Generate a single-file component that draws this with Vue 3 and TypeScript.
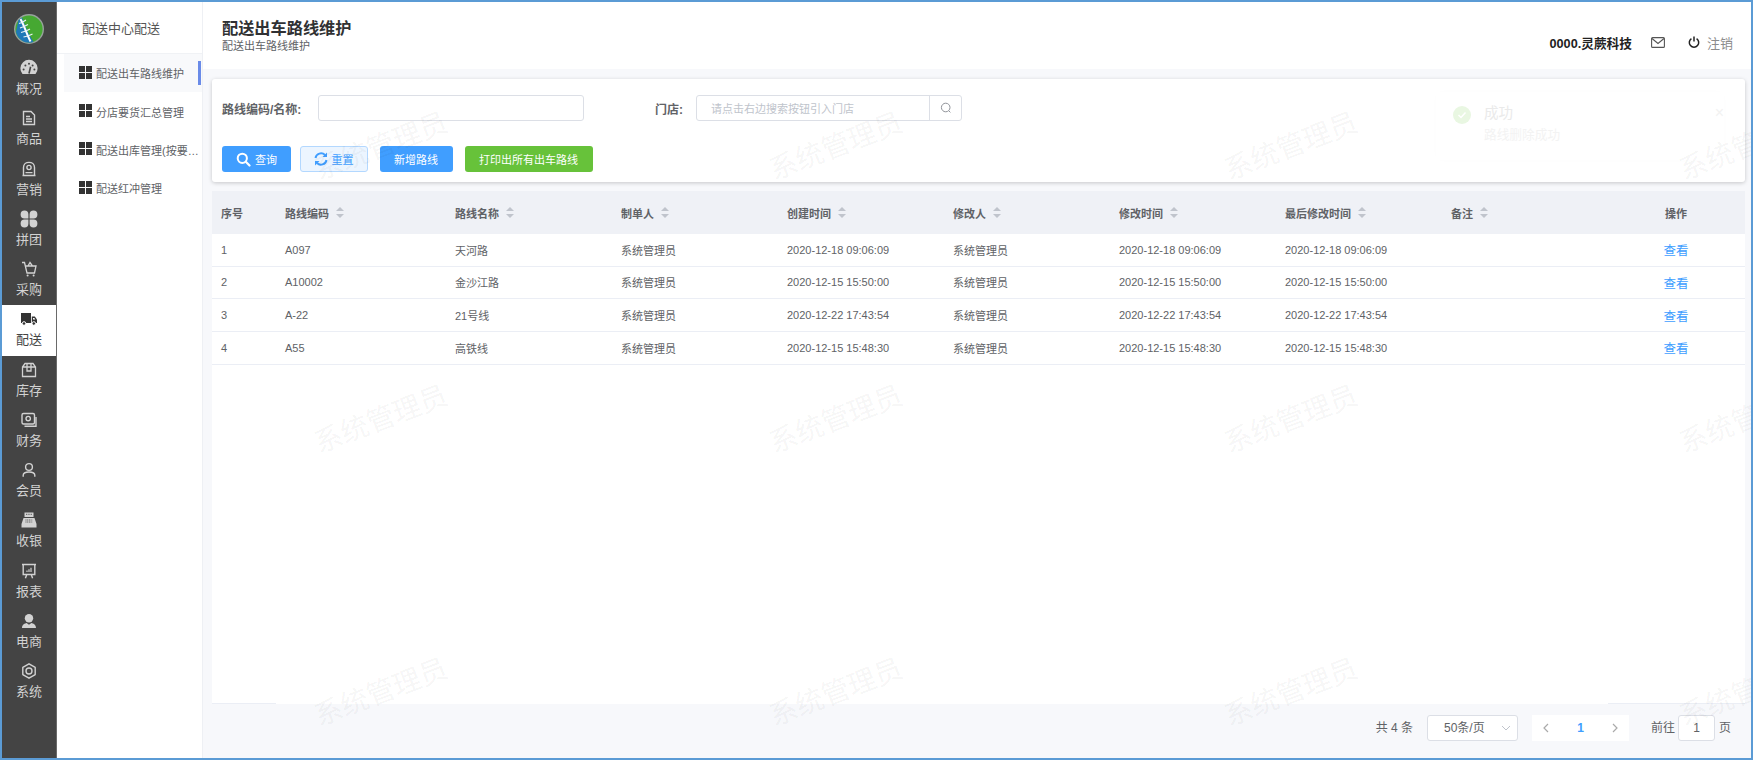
<script setup lang="ts">
interface RailItem { label: string; icon: string; active?: boolean }
const rail: RailItem[] = [
  { label: '概况', icon: 'gauge' }, { label: '商品', icon: 'doc' }, { label: '营销', icon: 'stamp' },
  { label: '拼团', icon: 'clover' }, { label: '采购', icon: 'cart' }, { label: '配送', icon: 'truck', active: true },
  { label: '库存', icon: 'box' }, { label: '财务', icon: 'money' }, { label: '会员', icon: 'user' },
  { label: '收银', icon: 'till' }, { label: '报表', icon: 'board' }, { label: '电商', icon: 'agent' }, { label: '系统', icon: 'gear' },
]
const subnav = ['配送出车路线维护', '分店要货汇总管理', '配送出库管理(按要货)', '配送红冲管理']
const columns = [
  { label: '序号' }, { label: '路线编码', sort: true }, { label: '路线名称', sort: true }, { label: '制单人', sort: true },
  { label: '创建时间', sort: true }, { label: '修改人', sort: true }, { label: '修改时间', sort: true },
  { label: '最后修改时间', sort: true }, { label: '备注', sort: true }, { label: '操作' },
]
const rows = [
  { n: 1, code: 'A097', name: '天河路', time: '2020-12-18 09:06:09' },
  { n: 2, code: 'A10002', name: '金沙江路', time: '2020-12-15 15:50:00' },
  { n: 3, code: 'A-22', name: '21号线', time: '2020-12-22 17:43:54' },
  { n: 4, code: 'A55', name: '高铁线', time: '2020-12-15 15:48:30' },
]
const marks = Array.from({ length: 12 }, (_, i) => i)
</script>

<template>
  <div class="app">
    <aside class="rail">
      <div class="logo">
        <svg width="32" height="32" viewBox="0 0 32 32">
          <circle cx="16" cy="16" r="15" fill="#98a29d" />
          <circle cx="16" cy="16" r="13.6" fill="#46a832" />
          <path d="M5.5 7 L9 4.5 C12 12 15 20 20.5 29 A13.6 13.6 0 0 1 3 19 Z" fill="#1f78b8" />
          <path d="M7.5 6 C11 12 14 22 17.5 28.5" fill="none" stroke="#fff" stroke-width="2" />
          <path d="M6 10.5 L9 9.5 L13 7 M7 15 L11 13.5 L15 11.5 M8 19.5 L13 18 L17 16 M10.5 24 L15 23 L19.5 21" fill="none" stroke="#eaf3f6" stroke-width="1.2" />
        </svg>
      </div>
      <div v-for="item in rail" :key="item.label" class="rail-item" :class="{ on: item.active }">
        <svg class="rail-icon" viewBox="0 0 20 20" width="20" height="20">
          <template v-if="item.icon === 'gauge'">
            <path d="M3.5 16 A8.6 8.6 0 1 1 16.5 16 Z" fill="currentColor" />
            <g fill="#444"><circle cx="4.6" cy="11.4" r="1" /><circle cx="6.4" cy="7.6" r="1" /><circle cx="10" cy="5.8" r="1" /><circle cx="13.6" cy="7.6" r="1" /><circle cx="15.4" cy="11.4" r="1" /></g>
            <path d="M10 15.5 L11.6 8.8" stroke="#444" stroke-width="1.6" />
          </template>
          <template v-else-if="item.icon === 'doc'">
            <path d="M4.5 3.5 H12 L15.5 7 V16.5 H4.5 Z M7 8.5 H11 M7 11 H13 M7 13.5 H13" fill="none" stroke="currentColor" stroke-width="1.4" />
          </template>
          <template v-else-if="item.icon === 'stamp'">
            <path d="M4.5 16 V8.5 C4.5 1.6 15.5 1.6 15.5 8.5 V16 M3.5 16.5 H16.5 M6.5 13.6 H13.5" fill="none" stroke="currentColor" stroke-width="1.4" />
            <circle cx="10" cy="8.5" r="2.1" fill="none" stroke="currentColor" stroke-width="1.4" />
          </template>
          <template v-else-if="item.icon === 'clover'">
            <g fill="currentColor">
              <path d="M9.4 9.4 H5.5 A3.9 3.9 0 1 1 9.4 5.5 Z" /><path d="M10.6 9.4 V5.5 A3.9 3.9 0 1 1 14.5 9.4 Z" />
              <path d="M9.4 10.6 V14.5 A3.9 3.9 0 1 1 5.5 10.6 Z" /><path d="M10.6 10.6 H14.5 A3.9 3.9 0 1 1 10.6 14.5 Z" />
            </g>
          </template>
          <template v-else-if="item.icon === 'cart'">
            <path d="M3 3.5 H5.5 L8 14 H15.5 L17 7 H6.5 M9 7 L11 3.5 L13.5 7" fill="none" stroke="currentColor" stroke-width="1.3" />
            <circle cx="8.6" cy="16.4" r="1" fill="currentColor" /><circle cx="14.6" cy="16.4" r="1" fill="currentColor" />
          </template>
          <template v-else-if="item.icon === 'truck'">
            <path d="M2 4 H12 V14 H2 Z" fill="#333" />
            <path d="M12.8 7.5 H15.8 L18 10.5 V14 H12.8 Z" fill="#333" />
            <circle cx="5" cy="14.5" r="1.8" fill="#333" stroke="#fff" /><circle cx="14.8" cy="14.5" r="1.8" fill="#333" stroke="#fff" />
            <path d="M14 9 H15.3 L16.4 10.6 H14 Z" fill="#fff" />
          </template>
          <template v-else-if="item.icon === 'box'">
            <path d="M3.5 7 L6 3.5 H14 L16.5 7 V16.5 H3.5 Z M3.5 7 H16.5 M8 3.5 V11 H12 V3.5" fill="none" stroke="currentColor" stroke-width="1.3" />
          </template>
          <template v-else-if="item.icon === 'money'">
            <rect x="3" y="3.5" width="12.5" height="10.5" rx="1.5" fill="none" stroke="currentColor" stroke-width="1.4" />
            <circle cx="9.2" cy="8.6" r="2.2" fill="none" stroke="currentColor" stroke-width="1.4" />
            <path d="M5.5 16.2 H17 V7" fill="none" stroke="currentColor" stroke-width="1.4" />
          </template>
          <template v-else-if="item.icon === 'user'">
            <circle cx="10" cy="7" r="3.4" fill="none" stroke="currentColor" stroke-width="1.4" />
            <path d="M4.2 16.8 V15.2 C4.2 12.8 7 12 10 12 C13 12 15.8 12.8 15.8 15.2 V16.8" fill="none" stroke="currentColor" stroke-width="1.4" />
          </template>
          <template v-else-if="item.icon === 'till'">
            <path d="M5.5 2.5 H14.5 V7 H5.5 Z M4.5 8 H15.5 L17.5 14 V17.5 H2.5 V14 Z" fill="currentColor" />
            <path d="M7 4.3 H13 M6.5 10 H13.5 M6.5 12 H13.5" stroke="#444" stroke-width=".9" stroke-dasharray="1 .7" />
          </template>
          <template v-else-if="item.icon === 'board'">
            <path d="M3 3.5 H17 M4.2 3.5 V13.5 H15.8 V3.5 M7.8 13.5 L6.4 17.3 M12.2 13.5 L13.6 17.3" fill="none" stroke="currentColor" stroke-width="1.4" />
            <path d="M8 11 V9.5 M10 11 V8.2 M12 11 V6.8" stroke="currentColor" stroke-width="1.2" />
          </template>
          <template v-else-if="item.icon === 'agent'">
            <circle cx="10" cy="7.2" r="4.2" fill="currentColor" />
            <path d="M3 17 C3 13.4 6 12.4 7.6 12 L10 13.8 L12.4 12 C14 12.4 17 13.4 17 17 Z" fill="currentColor" />
          </template>
          <template v-else>
            <path d="M10 2.8 L16.2 6.4 V13.6 L10 17.2 L3.8 13.6 V6.4 Z" fill="none" stroke="currentColor" stroke-width="1.4" stroke-linejoin="round" />
            <circle cx="10" cy="10" r="3" fill="none" stroke="currentColor" stroke-width="1.4" />
          </template>
        </svg>
        <span>{{ item.label }}</span>
      </div>
    </aside>

    <nav class="subnav">
      <div class="subnav-head">配送中心配送</div>
      <div v-for="(s, i) in subnav" :key="s" class="subnav-item" :class="{ on: i === 0 }">
        <svg class="tiles" width="13" height="13" viewBox="0 0 13 13"><path d="M0 0 H6 V6 H0 Z M7 0 H13 V6 H7 Z M0 7 H6 V13 H0 Z M7 7 H13 V13 H7 Z" fill="#333" /></svg>
        <span class="subnav-text">{{ s }}</span>
      </div>
    </nav>

    <main class="main">
      <header class="top">
        <div class="titles">
          <h1>配送出车路线维护</h1>
          <p>配送出车路线维护</p>
        </div>
        <div class="top-right">
          <b class="org">0000.灵蕨科技</b>
          <svg class="mail" width="14" height="11" viewBox="0 0 14 11"><rect x=".6" y=".6" width="12.8" height="9.8" rx="1" fill="none" stroke="#555" stroke-width="1.1" /><path d="M1 1.5 L7 6.5 L13 1.5" fill="none" stroke="#555" stroke-width="1.1" /></svg>
          <svg class="power" width="12" height="12" viewBox="0 0 12 12"><path d="M3.4 2.6 A4.7 4.7 0 1 0 8.6 2.6 M6 .5 V5.5" fill="none" stroke="#222" stroke-width="1.5" /></svg>
          <span class="logout">注销</span>
        </div>
      </header>

      <section class="body">
        <div class="card">
          <div class="form-row">
            <label class="lab">路线编码/名称:</label>
            <div class="field wide"></div>
            <label class="lab store-lab">门店:</label>
            <div class="field store">
              <span class="ph">请点击右边搜索按钮引入门店</span>
              <span class="field-btn">
                <svg width="12" height="12" viewBox="0 0 12 12"><circle cx="5.7" cy="5.5" r="4.3" fill="none" stroke="#909399" /><path d="M8.8 8.8 L10.4 10.4" stroke="#909399" /></svg>
              </span>
            </div>
          </div>
          <div class="btn-row">
            <button class="btn primary b1">
              <svg width="15" height="15" viewBox="0 0 15 15"><circle cx="6.3" cy="6.3" r="4.6" fill="none" stroke="#fff" stroke-width="2" /><path d="M9.8 9.8 L13.5 13.5" stroke="#fff" stroke-width="2.2" stroke-linecap="round" /></svg>
              查询
            </button>
            <button class="btn ghost b2">
              <svg width="14" height="14" viewBox="0 0 14 14"><path d="M1.5 6 A5.6 5.6 0 0 1 11 3 M12.5 8 A5.6 5.6 0 0 1 3 11" fill="none" stroke="#409eff" stroke-width="2" /><path d="M13 .5 V5 H8.5 Z M1 13.5 V9 H5.5 Z" fill="#409eff" /></svg>
              重置
            </button>
            <button class="btn primary b3">新增路线</button>
            <button class="btn green b4">打印出所有出车路线</button>
          </div>
          <div class="toast">
            <span class="toast-check"><svg width="10" height="10" viewBox="0 0 10 10"><path d="M1.5 5 L4 7.5 L8.5 2.5" fill="none" stroke="#fff" stroke-width="1.5" /></svg></span>
            <div><div class="toast-title">成功</div><div class="toast-msg">路线删除成功</div></div>
            <span class="toast-x">×</span>
          </div>
        </div>

        <div class="table">
          <div class="grid head">
            <div v-for="c in columns" :key="c.label" class="cell" :class="{ ctr: c.label === '操作' }">
              {{ c.label }}
              <span v-if="c.sort" class="sort"><i class="up"></i><i class="down"></i></span>
            </div>
          </div>
          <div v-for="r in rows" :key="r.n" class="grid row">
            <div class="cell">{{ r.n }}</div>
            <div class="cell">{{ r.code }}</div>
            <div class="cell">{{ r.name }}</div>
            <div class="cell">系统管理员</div>
            <div class="cell">{{ r.time }}</div>
            <div class="cell">系统管理员</div>
            <div class="cell">{{ r.time }}</div>
            <div class="cell">{{ r.time }}</div>
            <div class="cell"></div>
            <div class="cell ctr"><a class="link">查看</a></div>
          </div>
          <div class="fix-line left"></div>
          <div class="fix-line right"></div>
        </div>

        <footer class="pager">
          <span class="total">共 4 条</span>
          <div class="size">50条/页
            <svg width="10" height="6" viewBox="0 0 10 6"><path d="M1 1 L5 5 L9 1" fill="none" stroke="#c0c4cc" /></svg>
          </div>
          <div class="pages">
            <svg width="7" height="10" viewBox="0 0 7 10"><path d="M6 1 L2 5 L6 9" fill="none" stroke="#aaa" stroke-width="1.2" /></svg>
            <b>1</b>
            <svg width="7" height="10" viewBox="0 0 7 10"><path d="M1 1 L5 5 L1 9" fill="none" stroke="#aaa" stroke-width="1.2" /></svg>
          </div>
          <span class="goto">前往</span>
          <div class="jump">1</div>
          <span class="goto-end">页</span>
        </footer>
      </section>
    </main>

    <div class="marks" aria-hidden="true">
      <div v-for="m in marks" :key="m" class="mark"><span>系统管理员</span></div>
    </div>
  </div>
</template>

<style>
html, body { margin: 0; padding: 0; overflow: hidden; }
</style>

<style scoped>
* { box-sizing: border-box; }
.app {
  position: relative; display: flex; width: 1753px; height: 760px;
  border: 2px solid #5b9bd5; background: #fff; overflow: hidden;
  font-family: "Liberation Sans", "Noto Sans CJK SC", sans-serif; color: #606266;
}
.rail { width: 55px; flex: none; background: #444; border-right: 1px solid #6a6a6a; }
.logo { height: 52px; display: flex; align-items: center; justify-content: center; padding-top: 2px; padding-right: 1px; }
.rail-item {
  height: 50.25px; padding-top: 4px; display: flex; flex-direction: column; align-items: center;
  color: #d2d2d2; font-size: 13px; line-height: 16px;
}
.rail-icon { display: block; margin-bottom: 3px; }
.rail-item.on { background: #fff; color: #444; }

.subnav { width: 146px; flex: none; border-right: 1px solid #eef0f4; }
.subnav-head {
  height: 52px; padding: 18px 0 0 25px; font-size: 13px; line-height: 18px; color: #555;
  border-bottom: 1px solid #f0f2f5;
}
.subnav-item {
  position: relative; height: 38.4px; margin-left: 7px; width: 138px; padding: 0 1px 0 15px;
  display: flex; align-items: center; font-size: 11px; color: #606266;
}
.subnav-item.on { background: #f8f9fb; height: 38px; margin-bottom: .4px; }
.subnav-item.on::after {
  content: ""; position: absolute; right: 1px; top: 7px; width: 3px; height: 24px; background: #6a8be8;
}
.tiles { flex: none; margin-right: 4px; margin-top: -2px; }
.subnav-text { white-space: nowrap; overflow: hidden; text-overflow: ellipsis; min-width: 0; }

.main { flex: 1; min-width: 0; display: flex; flex-direction: column; background: #f7f8fb; }
.top { height: 67px; flex: none; background: #fff; display: flex; justify-content: space-between; padding: 16px 18px 0 19px; }
.titles h1 { margin: 0; font-size: 16.2px; line-height: 20px; font-weight: 700; color: #303133; }
.titles p { margin: 1px 0 0; font-size: 11px; line-height: 14px; color: #606266; }
.top-right { display: flex; align-items: center; height: 16px; margin-top: 16px; }
.org { font-size: 12.7px; color: #222; font-weight: 700; }
.mail { margin-left: 19px; }
.power { margin-left: 23px; }
.logout { margin-left: 7px; font-size: 13px; color: #8c8c8c; }

.body { flex: 1; min-height: 0; display: flex; flex-direction: column; padding: 10px 6px 0 9px; }
.card {
  position: relative; height: 103px; flex: none; background: #fff; border-radius: 3px;
  box-shadow: 0 1px 4px rgba(0, 0, 0, .2); padding: 16px 10px 0;
}
.form-row { display: flex; align-items: center; height: 26px; }
.lab { font-size: 12px; font-weight: 700; color: #606266; width: 96px; flex: none; }
.store-lab { width: 41px; margin-left: 71px; }
.field { height: 26px; border: 1px solid #dcdfe6; border-radius: 3px; background: #fff; flex: none; }
.wide { width: 266px; }
.store { width: 266px; display: flex; align-items: center; }
.ph { flex: 1; padding-left: 14px; font-size: 11px; color: #c0c4cc; }
.field-btn { width: 32px; height: 100%; border-left: 1px solid #dcdfe6; display: flex; align-items: center; justify-content: center; }
.btn-row { display: flex; margin-top: 25px; }
.btn {
  height: 26px; border-radius: 3px; border: 1px solid transparent; padding: 0; font: inherit; font-size: 11px;
  display: flex; align-items: center; justify-content: center; gap: 4px; color: #fff;
}
.primary { background: #409eff; }
.green { background: #67c23a; }
.ghost { background: #ecf5ff; border-color: #b3d8ff; color: #409eff; }
.b1 { width: 69px; }
.b2 { width: 68px; margin-left: 8.5px; }
.b3 { width: 73px; margin-left: 12px; }
.b4 { width: 128px; margin-left: 12px; }

.toast {
  position: absolute; top: 13px; left: 1224px; width: 288px; height: 68px; display: flex; padding: 14px 0 0 17px;
  border-radius: 6px; box-shadow: 0 0 8px rgba(0, 0, 0, .012);
}
.toast-check { width: 18px; height: 18px; border-radius: 50%; background: #e9f7e2; display: flex; align-items: center; justify-content: center; margin: 0 13px 0 0; }
.toast-title { font-size: 14.5px; line-height: 18px; margin-top: -2px; font-weight: 400; color: #eaeaea; }
.toast-msg { font-size: 12.7px; line-height: 18px; margin-top: 4px; color: #f3f3f3; }
.toast-x { position: absolute; top: 12px; right: 0; font-size: 16px; color: #f2f2f2; }

.table { position: relative; flex: 1; min-height: 0; margin-top: 9px; background: #fff; }
.grid { display: grid; grid-template-columns: 64px 170px 166px 166px 166px 166px 166px 166px 165px 138px; }
.head { height: 43px; background: #eff1f6; font-weight: 700; }
.row { height: 32.67px; border-bottom: 1px solid #ebeef5; }
.cell { display: flex; align-items: center; padding-left: 9px; font-size: 11px; white-space: nowrap; }
.cell.ctr { justify-content: center; padding-left: 0; }
.sort { display: inline-flex; flex-direction: column; gap: 2.5px; margin-left: 7px; }
.sort i { display: block; width: 0; height: 0; border-left: 4.5px solid transparent; border-right: 4.5px solid transparent; }
.sort .up { border-bottom: 4.5px solid #c0c4cc; }
.sort .down { border-top: 4.5px solid #c0c4cc; }
.link { color: #409eff; font-size: 12.5px; }
.fix-line { position: absolute; bottom: 0; height: 1px; background: #ebeef5; }
.fix-line.left { left: 0; width: 64px; }
.fix-line.right { right: 0; width: 137px; }

.pager { height: 54px; flex: none; display: flex; align-items: flex-start; justify-content: flex-end; padding: 11px 14px 0 0; font-size: 12px; }
.total { line-height: 26px; margin-right: 14px; }
.size {
  position: relative; width: 91px; height: 26px; border: 1px solid #dcdfe6; border-radius: 3px; background: #fff;
  line-height: 24px; padding-left: 16px;
}
.size svg { position: absolute; right: 6px; top: 9px; }
.pages { width: 97px; height: 26px; margin-left: 14px; background: #fff; display: flex; align-items: center; justify-content: space-between; padding: 0 10px; }
.pages b { color: #409eff; font-size: 12px; }
.goto { margin-left: 22px; line-height: 26px; }
.jump { width: 37px; height: 26px; margin-left: 3px; border: 1px solid #dcdfe6; border-radius: 3px; background: #fff; text-align: center; line-height: 24px; }
.goto-end { margin-left: 4px; line-height: 26px; }

.marks {
  position: absolute; left: 150.5px; top: 5px; right: 0; bottom: 0; pointer-events: none; overflow: hidden;
  display: grid; grid-template-columns: repeat(4, 455px); grid-template-rows: repeat(3, 273px);
}
.mark { display: flex; align-items: center; justify-content: center; }
.mark span { display: block; transform: rotate(-21deg); font-size: 28px; white-space: nowrap; color: rgba(0, 0, 0, .05); }
</style>
